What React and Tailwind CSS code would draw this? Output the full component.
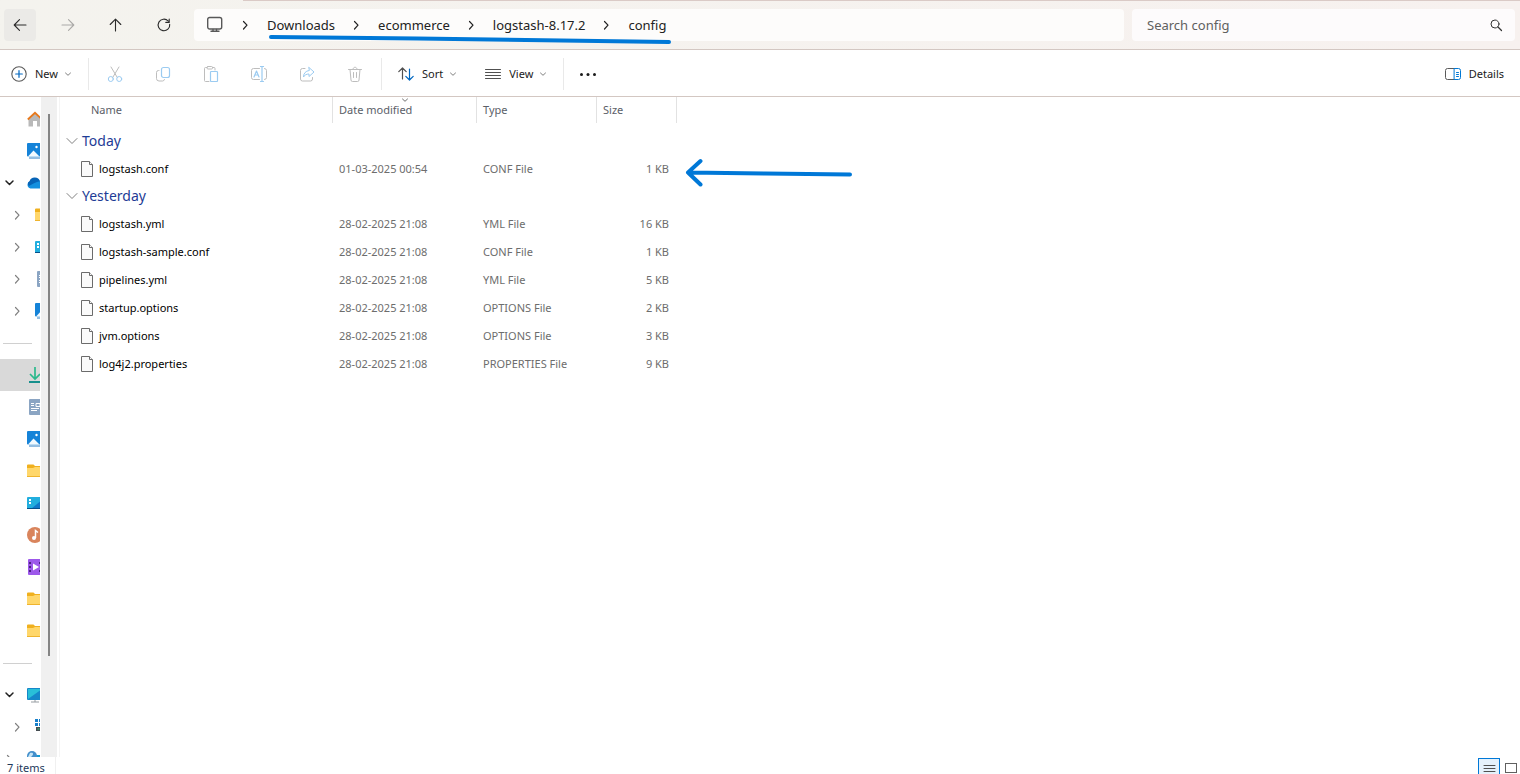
import React from 'react';

const groups = [
  {
    label: 'Today',
    files: [{ name: 'logstash.conf', modified: '01-03-2025 00:54', type: 'CONF File', size: '1 KB' }],
  },
  {
    label: 'Yesterday',
    files: [
      { name: 'logstash.yml', modified: '28-02-2025 21:08', type: 'YML File', size: '16 KB' },
      { name: 'logstash-sample.conf', modified: '28-02-2025 21:08', type: 'CONF File', size: '1 KB' },
      { name: 'pipelines.yml', modified: '28-02-2025 21:08', type: 'YML File', size: '5 KB' },
      { name: 'startup.options', modified: '28-02-2025 21:08', type: 'OPTIONS File', size: '2 KB' },
      { name: 'jvm.options', modified: '28-02-2025 21:08', type: 'OPTIONS File', size: '3 KB' },
      { name: 'log4j2.properties', modified: '28-02-2025 21:08', type: 'PROPERTIES File', size: '9 KB' },
    ],
  },
];

const path = ['Downloads', 'ecommerce', 'logstash-8.17.2', 'config'];

const navItems = [
  { icon: 'home' },
  { icon: 'pictures' },
  { icon: 'cloud', arrow: 'open' },
  { icon: 'folder', arrow: 'closed', nested: true },
  { icon: 'desktop', arrow: 'closed', nested: true },
  { icon: 'document', arrow: 'closed', nested: true },
  { icon: 'pictures', arrow: 'closed', nested: true },
  { divider: true },
  { icon: 'download', active: true },
  { icon: 'document' },
  { icon: 'pictures' },
  { icon: 'folder' },
  { icon: 'desktop' },
  { icon: 'music' },
  { icon: 'video' },
  { icon: 'folder' },
  { icon: 'folder' },
  { divider: true },
  { icon: 'monitor', arrow: 'open' },
  { icon: 'drive', arrow: 'closed', nested: true },
  { icon: 'network', arrow: 'closed' },
];

const Svg = ({ size = 16, className = '', children }) => (
  <svg
    width={size}
    height={size}
    viewBox={`0 0 ${size} ${size}`}
    fill="none"
    stroke="currentColor"
    strokeLinecap="round"
    strokeLinejoin="round"
    className={`shrink-0 ${className}`}
    aria-hidden="true"
  >
    {children}
  </svg>
);

const BackIcon = () => (
  <Svg><path d="M14 8H2.2M7.5 2.7 2.2 8l5.3 5.3" strokeWidth="1.1" /></Svg>
);
const ForwardIcon = () => (
  <Svg><path d="M2 8h11.8M8.5 2.7 13.8 8l-5.3 5.3" strokeWidth="1.1" /></Svg>
);
const UpIcon = () => (
  <Svg><path d="M7.5 14V2.2M2.2 7.5l5.3-5.3 5.3 5.3" strokeWidth="1.1" /></Svg>
);
const RefreshIcon = () => (
  <Svg><path d="M13.7 7.2A5.8 5.8 0 1 1 12.2 4M13.2 2v3.4H9.8" strokeWidth="1.1" /></Svg>
);
const ChevronDown = ({ className = '' }) => (
  <Svg size={8} className={className}><path d="m1.5 3 2.5 2.3L6.5 3" /></Svg>
);
const ChevronRight = ({ className = '' }) => (
  <Svg size={10} className={className}><path d="m3.5 1.5 3.5 3.7L3.5 9" strokeWidth="1.2" /></Svg>
);

const PcIcon = () => (
  <Svg size={18} className="text-[#585858]">
    <rect x="1.7" y="1.5" width="14" height="11.5" rx="2" strokeWidth="1.4" />
    <path d="M7 13.5v1.500M10.500 13.500v1.500M5 15.300h8" strokeWidth="1.4" />
  </Svg>
);

const NewIcon = () => (
  <Svg className="text-[#5a5a5a]">
    <circle cx="8" cy="8" r="7.2" strokeWidth="1.1" />
    <path d="M8 4.7v6.6M4.7 8h6.6" stroke="#0067c0" strokeWidth="1.2" />
  </Svg>
);

const actions = [
  {
    label: 'Cut',
    icon: (
      <>
        <path d="m4 1 6.2 10.3M12 1 5.8 11.3" stroke="#bdbdbd" />
        <circle cx="3.8" cy="13" r="2.5" stroke="#9bcbf1" />
        <circle cx="12.2" cy="13" r="2.5" stroke="#9bcbf1" />
      </>
    ),
  },
  {
    label: 'Copy',
    icon: (
      <>
        <path d="M4 4.500H3.500a2 2 0 0 0-2 2v6a2.500 2.500 0 0 0 2.500 2.500h3.500a2 2 0 0 0 2-1.500" stroke="#bdbdbd" />
        <rect x="6.500" y="1.500" width="8" height="10" rx="2" stroke="#9bcbf1" strokeWidth="1.200" />
      </>
    ),
  },
  {
    label: 'Paste',
    icon: (
      <>
        <path d="M6 15.5H2.5a1 1 0 0 1-1-1v-12a1 1 0 0 1 1-1H4M9.500 1.500H11a1 1 0 0 1 1 1V4" stroke="#bdbdbd" />
        <rect x="4" y=".5" width="5.500" height="2.500" rx="1" stroke="#bdbdbd" />
        <rect x="7.500" y="5.500" width="7" height="10" rx=".8" stroke="#9bcbf1" strokeWidth="1.200" />
      </>
    ),
  },
  {
    label: 'Rename',
    icon: (
      <>
        <path d="M8.500 2.500h-6a2 2 0 0 0-2 2v7a2 2 0 0 0 2 2h6M13.500 2.500a2 2 0 0 1 2 2v7a2 2 0 0 1-2 2" stroke="#bdbdbd" />
        <path d="M3 11 5.500 5l2.500 6M3.800 9h3.400M9.500.5h3M9.500 15.500h3M11 .5v15" stroke="#9bcbf1" strokeWidth="1.200" />
      </>
    ),
  },
  {
    label: 'Share',
    icon: (
      <>
        <path d="M6 2.500H3.500a2 2 0 0 0-2 2v8.500a2 2 0 0 0 2 2h8a2 2 0 0 0 2-2V11.500" stroke="#bdbdbd" />
        <path d="M10 1.500 15 6l-5 4.500V8C7.500 8 5.500 9 4.500 11c0-3.500 2-6 5.500-6.500z" stroke="#9bcbf1" />
      </>
    ),
  },
  {
    label: 'Delete',
    icon: (
      <path d="M1.500 3.500h13M6 3.200C6 .500 10 .500 10 3.200M3 3.500l1 10.500a1.500 1.500 0 0 0 1.500 1.500h5A1.500 1.500 0 0 0 12 14l1-10.500M6.500 6.500v5M9.500 6.500v5" stroke="#bdbdbd" />
    ),
  },
];

const SortIcon = () => (
  <Svg className="text-[#505050]">
    <path d="M4.500 13V2M.8 5.700 4.500 2l3.700 3.700" strokeWidth="1.200" />
    <path d="M11.500 3v11M7.800 10.300l3.700 3.700 3.700-3.700" stroke="#0067c0" strokeWidth="1.200" />
  </Svg>
);
const ViewIcon = () => (
  <Svg className="text-[#505050]"><path d="M.5 3.500h15M.5 6.500h15M.5 9.500h15M.5 12.500h15" /></Svg>
);
const DetailsIcon = () => (
  <Svg>
    <path d="M9.500 2.500h-7a2 2 0 0 0-2 2v7a2 2 0 0 0 2 2h7" stroke="#5a5a5a" />
    <path d="M9.500 2.500h4a2 2 0 0 1 2 2v7a2 2 0 0 1-2 2h-4zM11.500 6.500h2M11.500 8.500h2M11.500 10.500h2" stroke="#0078d4" />
  </Svg>
);
const FileIcon = () => (
  <svg width="12" height="16" viewBox="0 0 12 16" fill="#fafafa" stroke="#6b6b6b" className="shrink-0" aria-hidden="true">
    <path d="M.5.5h8l3 3v12H.5z" />
    <path d="M8.500.5v3h3" />
  </svg>
);

const NavIcon = ({ name }) => (
  <svg width="16" height="16" viewBox="0 0 16 16" className="shrink-0" aria-hidden="true">
    {name === 'home' && (
      <>
        <path d="M1.500 8 8 2l6.500 6v7.500H10V10H6v5.500H1.500z" fill="#b9b9b9" />
        <path d="M.8 8.500 8 1.800l7.200 6.700" fill="none" stroke="#e8791c" strokeWidth="1.800" />
      </>
    )}
    {name === 'pictures' && (
      <>
        <rect width="16" height="13.500" rx="1" fill="#1583d8" />
        <path d="M1 13.500 6.500 7.500l6 6z" fill="#f2faff" />
        <circle cx="9.500" cy="4" r="1.200" fill="#fff" />
        <path d="M2 15h12" stroke="#2b7fc5" />
      </>
    )}
    {name === 'cloud' && (
      <>
        <path d="M3.500 13.500a3.800 3.800 0 0 1-.5-7.300A5.500 5.500 0 0 1 13 6.500a3.500 3.500 0 0 1 2 7z" fill="#1490df" />
        <path d="M2.500 6.200A5.500 5.500 0 0 1 13 6.500c-3 0-4.500 1-11 4.500-1.500-1-1.500-4 .5-4.800z" fill="#0764b7" />
      </>
    )}
    {name === 'folder' && (
      <>
        <path d="M0 2.500a1 1 0 0 1 1-1h5.500L8 3h7a1 1 0 0 1 1 1v9.500H0z" fill="#f0b01e" />
        <path d="M0 5h6l2-1h8v10H0z" fill="#ffd76b" />
        <path d="M0 13.500h16" stroke="#efb42e" />
      </>
    )}
    {name === 'desktop' && (
      <>
        <rect y="2" width="16" height="12" rx="1" fill="#22aede" />
        <path d="M4 14 16 4v10z" fill="#1277c8" />
        <path d="M2 4h2v2H2zM2 7h2v2H2z" fill="#fff" />
        <path d="M0 13.500h16" stroke="#07508a" />
      </>
    )}
    {name === 'document' && (
      <>
        <rect x="2" width="13" height="16" rx="1" fill="#8ba5c3" />
        <path d="M4 4.500h3M4 6.500h3M4 9.500h8M4 11.500h6M9 4.500h4v3H9z" stroke="#fff" fill="none" />
      </>
    )}
    {name === 'download' && (
      <>
        <path d="M8 0v11.500M3 7l5 5 5-5" fill="none" stroke="#2bb98c" strokeWidth="1.700" />
        <path d="M2 15h12" stroke="#168f8c" strokeWidth="2" />
      </>
    )}
    {name === 'music' && (
      <>
        <circle cx="8" cy="8" r="8" fill="#d9845c" />
        <path d="M8.500 11V3.500L11 5.500" stroke="#fff" strokeWidth="1.500" fill="none" />
        <circle cx="7" cy="11" r="2" fill="#fff" />
      </>
    )}
    {name === 'video' && (
      <>
        <rect x="1" width="15" height="16" rx="1" fill="#9d58ea" />
        <path d="M2 3h2v2H2zM2 7h2v2H2zM2 11h2v2H2zM12 3h2v2h-2zM12 11h2v2h-2z" fill="#4b217f" />
        <path d="m6 4.500 6 3.500-6 3.500z" fill="#fff" />
      </>
    )}
    {name === 'monitor' && (
      <>
        <rect y="1" width="16" height="12" rx="1" fill="#1687c9" />
        <path d="M1 2h14L1 12z" fill="#29bfd8" />
        <path d="M4 15h8M8 13v2" stroke="#969ca1" />
      </>
    )}
    {name === 'drive' && (
      <>
        <path d="M0 0h3v3H0zM4 0h3v3H4zM0 4h3v3H0zM4 4h3v3H4z" fill="#167fca" />
        <path d="M1 8h15v4H1z" fill="#464d52" />
        <path d="M2.500 10h2" stroke="#2acb8d" />
      </>
    )}
    {name === 'network' && (
      <>
        <path d="M6 4h10v9H6z" fill="#159bd0" />
        <circle cx="5" cy="5" r="5" fill="#438fcb" />
        <path d="M3 2c3-1 4 1 2 3S3 8 1 6" fill="#c5e4f5" />
      </>
    )}
  </svg>
);

const TopBar = () => (
  <header className="relative border-b border-[#d3c7c2] bg-linear-to-r from-[#f4f3ee] to-[#f7f1ef]">
    <div className="ml-[243px] h-px bg-[#dacac6]" />
    <div className="flex items-center pt-2 pr-[5px] pb-2 pl-1">
      <div className="flex gap-4 text-[#2b2b2b]">
        <button aria-label="Back" className="flex size-8 items-center justify-center rounded bg-[#ebeae7]"><BackIcon /></button>
        <button aria-label="Forward" disabled className="flex size-8 items-center justify-center rounded text-[#aaa9a7]"><ForwardIcon /></button>
        <button aria-label="Up" className="flex size-8 items-center justify-center rounded"><UpIcon /></button>
        <button aria-label="Refresh" className="flex size-8 items-center justify-center rounded"><RefreshIcon /></button>
      </div>
      <nav aria-label="Path" className="ml-3.5 flex h-8 flex-1 items-center rounded bg-[#fdfcfb] pl-3 text-[13px] text-[#222]">
        <PcIcon />
        <ol className="flex items-center pl-4">
          {path.map((part) => (
            <li key={part} className="flex items-center">
              <ChevronRight />
              <a href="#" className="pt-0.5 pr-4 pl-[17px]">{part}</a>
            </li>
          ))}
        </ol>
      </nav>
      <label className="ml-2 flex h-8 w-[383px] items-center rounded bg-[#fdfbfc] pr-3 pl-[15px] text-[#333]">
        <input type="search" aria-label="Search config" placeholder="Search config" className="min-w-0 flex-1 bg-transparent pt-0.5 text-[13px] outline-none placeholder:text-[#606060]" />
        <Svg size={14}>
          <circle cx="6" cy="6" r="4" />
          <path d="m9 9 3.500 3.500" strokeWidth="1.200" />
        </Svg>
      </label>
    </div>
    <svg width="406" height="12" viewBox="0 0 406 12" className="pointer-events-none absolute top-8 left-[267px]" aria-hidden="true">
      <path d="M4 5 150 6.500 402 10" fill="none" stroke="#0078d7" strokeWidth="4" strokeLinecap="round" />
    </svg>
  </header>
);

const Toolbar = () => (
  <div role="toolbar" className="flex h-[47px] shrink-0 items-center border-b border-[#d3c7c2] pt-0.5 pr-4 pl-[11px] text-[11px] text-[#1b1b1b]">
    <button className="flex w-[77px] items-center gap-2">
      <NewIcon />
      New
      <ChevronDown className="-ml-0.5 text-[#808080]" />
    </button>
    <div className="flex h-8 items-center gap-4 border-x border-[#e9e9e9] px-2.5">
      {actions.map((action) => (
        <button key={action.label} aria-label={action.label} disabled className="flex size-8 items-center justify-center">
          <Svg>{action.icon}</Svg>
        </button>
      ))}
    </div>
    <div className="flex h-8 items-center gap-7 border-r border-[#e9e9e9] px-4">
      <button className="flex items-center gap-2">
        <SortIcon />
        Sort
        <ChevronDown className="-ml-0.5 text-[#808080]" />
      </button>
      <button className="flex items-center gap-2">
        <ViewIcon />
        View
        <ChevronDown className="-ml-0.5 text-[#808080]" />
      </button>
    </div>
    <button aria-label="See more" className="ml-4 text-[#1b1b1b]">
      <svg width="16" height="16" fill="currentColor" aria-hidden="true">
        <circle cx="1.500" cy="8.500" r="1.500" />
        <circle cx="8" cy="8.500" r="1.500" />
        <circle cx="14.500" cy="8.500" r="1.500" />
      </svg>
    </button>
    <button className="ml-auto flex items-center gap-2">
      <DetailsIcon />
      Details
    </button>
  </div>
);

const Sidebar = () => (
  <aside className="flex w-[57px] shrink-0 overflow-hidden">
    <ul className="w-10 overflow-hidden pt-1.5">
      {navItems.map((item, i) =>
        item.divider ? (
          <li key={i} className="flex h-8 items-center pl-[3px]">
            <hr className="w-[29px] border-[#d0d0d0]" />
          </li>
        ) : (
          <li key={i} className={`flex h-8 items-center ${item.active ? 'bg-[#d9d9d9]' : ''}`}>
            <span className={`flex shrink-0 ${item.nested ? 'w-[35px] pl-3' : 'w-[27px] pl-1'}`}>
              {item.arrow === 'open' && (
                <Svg size={12} className="text-[#222]"><path d="m2 4 3.500 3.500L9 4" strokeWidth="1.500" /></Svg>
              )}
              {item.arrow === 'closed' && <ChevronRight className="text-[#808080]" />}
            </span>
            <NavIcon name={item.icon} />
          </li>
        )
      )}
    </ul>
    <div className="ml-px flex w-4 justify-center bg-[#f0f0f0] pt-[17px] pb-[101px]">
      <div className="w-0.5 bg-[#858585]" />
    </div>
  </aside>
);

const FileTable = () => (
  <table className="w-[617px] table-fixed border-separate border-spacing-0 text-left text-[11px] text-[#6d6d6d]">
    <colgroup>
      <col className="w-[273px]" />
      <col className="w-36" />
      <col className="w-[120px]" />
      <col className="w-20" />
    </colgroup>
    <thead>
      <tr className="h-[31px] text-[#5b6068]">
        <th className="p-0 align-top font-normal">
          <div className="flex h-[26px] items-center border-r border-[#e2e2e2] pl-[31px]">Name</div>
        </th>
        <th className="p-0 align-top font-normal" aria-sort="descending">
          <div className="relative flex h-[26px] items-center border-r border-[#e2e2e2] pl-1.5">
            Date modified
            <ChevronDown className="absolute -top-px left-1/2 -translate-x-1/2 text-[#707070]" />
          </div>
        </th>
        <th className="p-0 align-top font-normal">
          <div className="flex h-[26px] items-center border-r border-[#e2e2e2] pl-1.5">Type</div>
        </th>
        <th className="p-0 align-top font-normal">
          <div className="flex h-[26px] items-center border-r border-[#e2e2e2] pl-1.5">Size</div>
        </th>
      </tr>
    </thead>
    {groups.map((group) => (
      <tbody key={group.label}>
        <tr className="h-[27px]">
          <th colSpan={4} className="p-0 pb-0.5 font-normal">
            <button className="flex items-center gap-1 pl-1.5 text-[14px] leading-5 text-[#1e3c96]">
              <Svg size={12} className="text-[#808080]"><path d="m1 3.500 5 5 5-5" /></Svg>
              {group.label}
            </button>
          </th>
        </tr>
        {group.files.map((file) => (
          <tr key={file.name} className="h-7">
            <td className="p-0">
              <div className="flex items-center gap-1.5 pl-[21px] text-black">
                <FileIcon />
                {file.name}
              </div>
            </td>
            <td className="py-0 pr-0 pl-1.5">{file.modified}</td>
            <td className="py-0 pr-0 pl-1.5">{file.type}</td>
            <td className="py-0 pr-2 pl-0 text-right">{file.size}</td>
          </tr>
        ))}
      </tbody>
    ))}
  </table>
);

const StatusBar = () => (
  <footer className="flex h-[17px] shrink-0 items-start justify-between pr-[3px] pl-[7px] text-[11px] text-[#1e395b]">
    <div className="flex w-[49px] border-r border-[#f0f0f0] pt-1 leading-[13px]">7 items</div>
    <div className="flex h-[17px] overflow-hidden pt-px">
      <button aria-label="Details view" className="flex h-5 w-[22px] items-center justify-center border border-[#0078d7] bg-[#e5f1fb]">
        <Svg className="text-[#505050]"><path d="M3 5.500h11M3 8.500h11M3 11.500h11" /></Svg>
      </button>
      <button aria-label="Large icons view" className="ml-[5px] flex h-5 items-center">
        <span className="h-2.5 w-3 border border-[#606060]" />
      </button>
    </div>
  </footer>
);

const App = () => {
  return (
    <div className="flex h-screen flex-col overflow-hidden bg-white font-['Noto_Sans','Open_Sans',sans-serif]">
      <TopBar />
      <Toolbar />
      <div className="flex min-h-0 flex-1">
        <Sidebar />
        <main className="relative ml-0.5 min-w-0 flex-1 overflow-hidden border-l border-[#f4f4f4]">
          <FileTable />
          <svg width="170" height="32" viewBox="0 0 170 32" className="pointer-events-none absolute top-[60px] left-[625px]" aria-hidden="true">
            <path d="M165 17.500 80 16.500 3 15.500M15.500 4 3 15.500 15.500 27.500" fill="none" stroke="#0078d7" strokeWidth="4" strokeLinecap="round" strokeLinejoin="round" />
          </svg>
        </main>
      </div>
      <StatusBar />
    </div>
  );
};

export default App;
